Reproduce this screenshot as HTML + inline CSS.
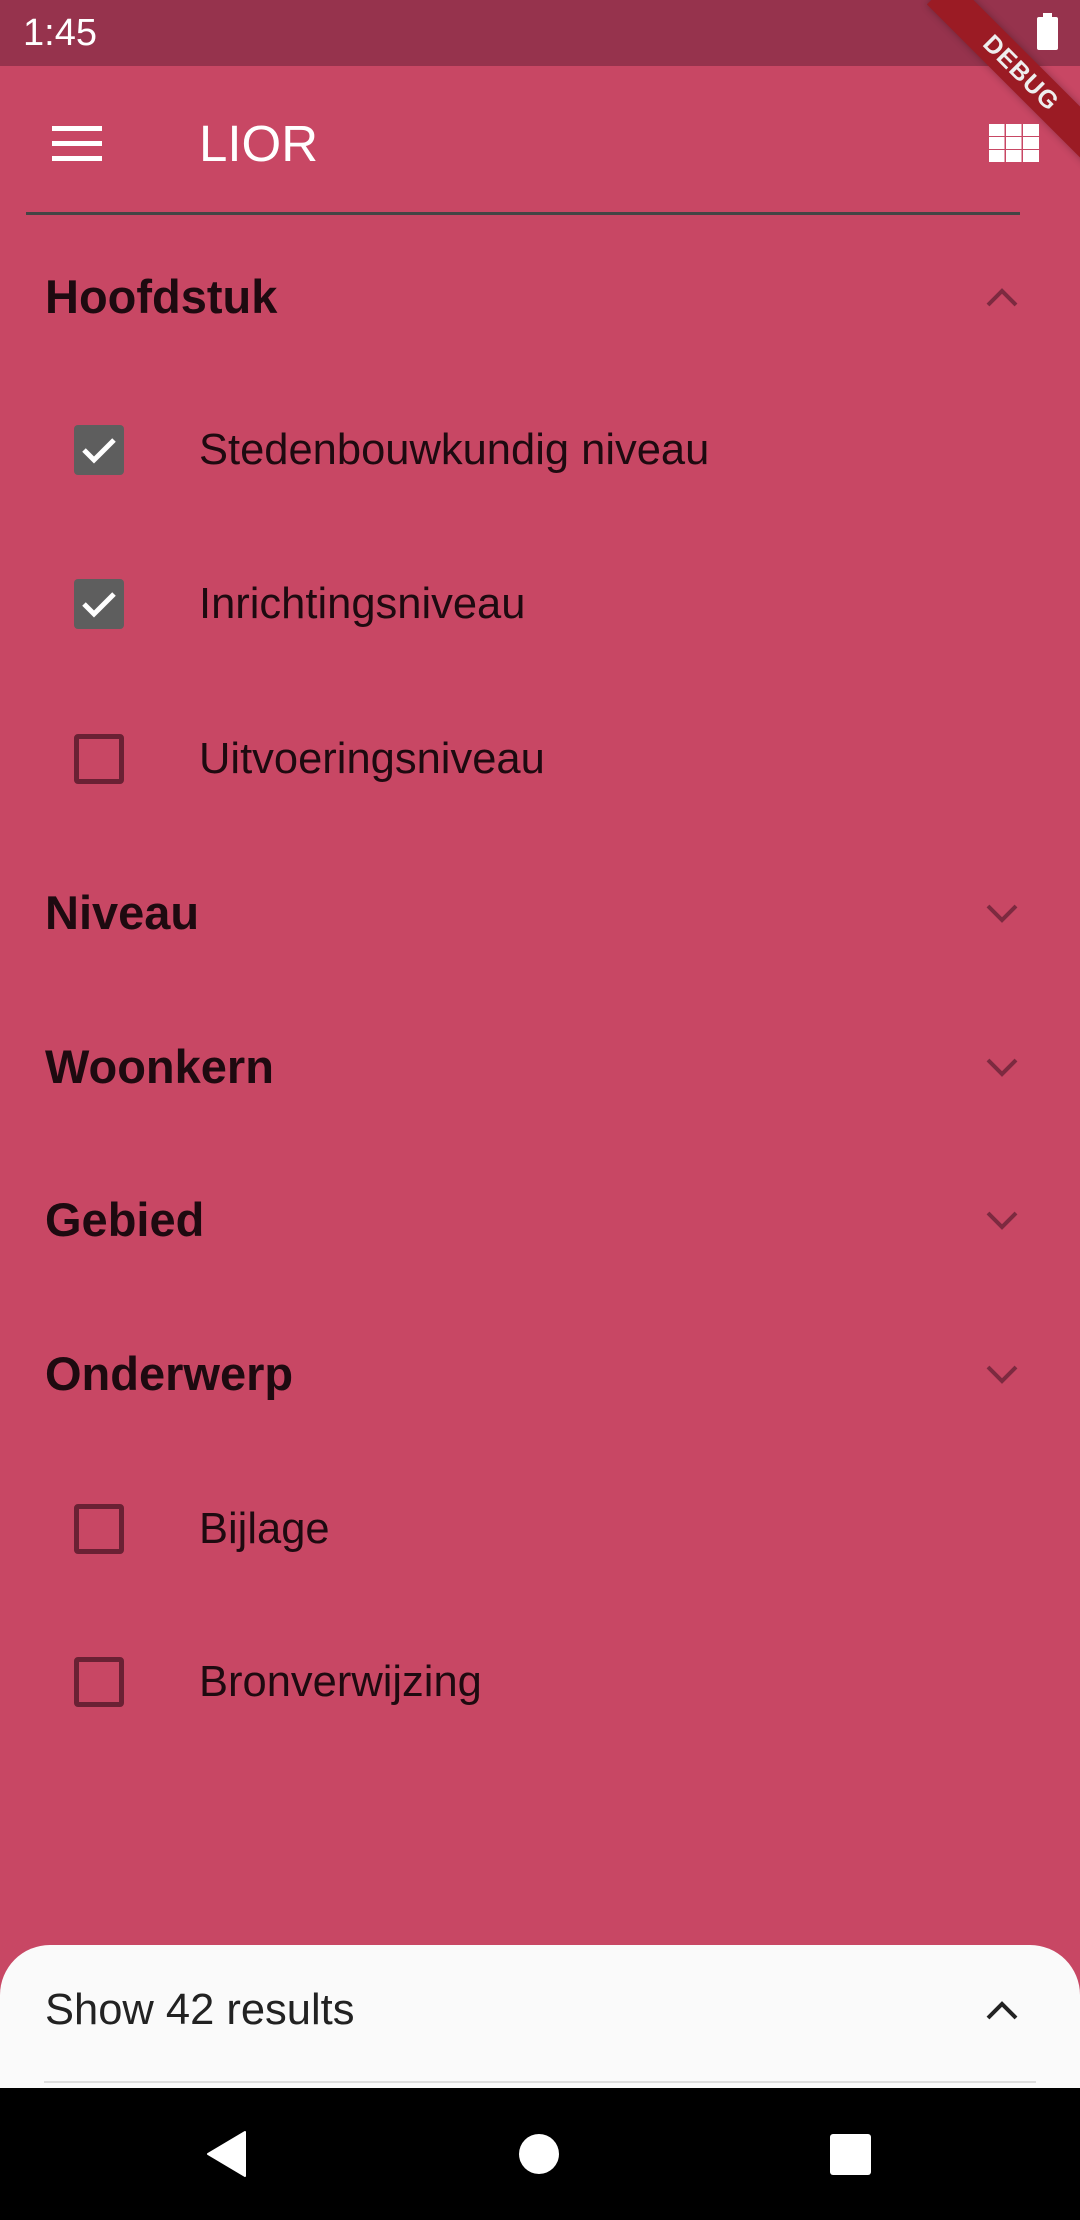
<!DOCTYPE html>
<html><head><meta charset="utf-8"><style>
*{margin:0;padding:0;box-sizing:border-box}
body{width:1080px;height:2220px;overflow:hidden;background:#c84764;font-family:"Liberation Sans",sans-serif;position:relative}
.abs{position:absolute}
.status{left:0;top:0;width:1080px;height:66px;background:#96334d}
.time{left:23px;top:12px;color:#fff;font-size:38px}
.title{left:199px;top:114px;color:#fff;font-size:51px;font-weight:500}
.divider{left:26px;top:212px;width:994px;height:3px;background:#444}
.hdr{left:45px;font-size:47px;font-weight:bold;color:#1e0a10;line-height:60px}
.item{left:199px;font-size:43.5px;color:#1e0a10;line-height:60px}
.cb{left:74px;width:50px;height:50px;border-radius:4px}
.cb.on{background:#5e5e5e}
.cb.off{border:5px solid #6a2134}
.chev{left:982px;width:40px;height:40px}
.sheet{left:0;top:1945px;width:1080px;height:160px;background:#fafafa;border-radius:50px 50px 0 0}
.nav{left:0;top:2088px;width:1080px;height:132px;background:#000}
</style></head><body>
<div class="abs status"></div>
<div class="abs time">1:45</div>
<div class="abs" style="left:1037px;top:17px;width:21px;height:33px;background:#fff;border-radius:2px"></div>
<div class="abs" style="left:1043px;top:13px;width:9px;height:5px;background:#fff"></div>

<svg class="abs" style="left:52px;top:126px" width="50" height="36"><rect x="0" y="0" width="50" height="5" fill="#fff"/><rect x="0" y="15" width="50" height="5" fill="#fff"/><rect x="0" y="30" width="50" height="5" fill="#fff"/></svg>
<div class="abs title">LIOR</div>
<svg class="abs" style="left:989px;top:124px" width="50" height="38" fill="#fff">
<rect x="0" y="0" width="15.5" height="12"/><rect x="17" y="0" width="15.5" height="12"/><rect x="34" y="0" width="16" height="12"/>
<rect x="0" y="13" width="15.5" height="12"/><rect x="17" y="13" width="15.5" height="12"/><rect x="34" y="13" width="16" height="12"/>
<rect x="0" y="26" width="15.5" height="12"/><rect x="17" y="26" width="15.5" height="12"/><rect x="34" y="26" width="16" height="12"/>
</svg>
<div class="abs divider"></div>

<div class="abs hdr" style="top:267px">Hoofdstuk</div>
<svg class="abs chev" style="top:277px" viewBox="0 0 40 40"><path d="M6 28 L20 14 L34 28" stroke="#7c2a40" stroke-width="4" fill="none"/></svg>

<div class="abs cb on" style="top:425px"><svg width="50" height="50"><path d="M10 25 L20 35 L40 15" stroke="#fff" stroke-width="5" fill="none"/></svg></div>
<div class="abs item" style="top:420px">Stedenbouwkundig niveau</div>
<div class="abs cb on" style="top:579px"><svg width="50" height="50"><path d="M10 25 L20 35 L40 15" stroke="#fff" stroke-width="5" fill="none"/></svg></div>
<div class="abs item" style="top:574px">Inrichtingsniveau</div>
<div class="abs cb off" style="top:734px"></div>
<div class="abs item" style="top:729px">Uitvoeringsniveau</div>

<div class="abs hdr" style="top:883px">Niveau</div>
<svg class="abs chev" style="top:893px" viewBox="0 0 40 40"><path d="M6 13 L20 27 L34 13" stroke="#7c2a40" stroke-width="4" fill="none"/></svg>
<div class="abs hdr" style="top:1037px">Woonkern</div>
<svg class="abs chev" style="top:1047px" viewBox="0 0 40 40"><path d="M6 13 L20 27 L34 13" stroke="#7c2a40" stroke-width="4" fill="none"/></svg>
<div class="abs hdr" style="top:1190px">Gebied</div>
<svg class="abs chev" style="top:1200px" viewBox="0 0 40 40"><path d="M6 13 L20 27 L34 13" stroke="#7c2a40" stroke-width="4" fill="none"/></svg>
<div class="abs hdr" style="top:1344px">Onderwerp</div>
<svg class="abs chev" style="top:1354px" viewBox="0 0 40 40"><path d="M6 13 L20 27 L34 13" stroke="#7c2a40" stroke-width="4" fill="none"/></svg>

<div class="abs cb off" style="top:1504px"></div>
<div class="abs item" style="top:1499px">Bijlage</div>
<div class="abs cb off" style="top:1657px"></div>
<div class="abs item" style="top:1652px">Bronverwijzing</div>

<div class="abs sheet"></div>
<div class="abs" style="left:45px;top:1980px;font-size:43.5px;color:#222;line-height:60px">Show 42 results</div>
<svg class="abs chev" style="top:1990px" viewBox="0 0 40 40"><path d="M6 28 L20 14 L34 28" stroke="#222" stroke-width="4" fill="none"/></svg>
<div class="abs" style="left:44px;top:2081px;width:992px;height:2px;background:#ddd"></div>

<div class="abs nav"></div>
<svg class="abs" style="left:200px;top:2128px" width="700" height="52" fill="#fff">
<path d="M45 4 L45 48 L8 26 Z" stroke="#fff" stroke-width="2" stroke-linejoin="round"/>
<circle cx="339" cy="26" r="20"/>
<rect x="630" y="6" width="41" height="41" rx="3"/>
</svg>

<div class="abs" style="left:906px;top:55px;width:230px;height:36px;background:#9b1b24;transform:rotate(45deg);color:#eee;font-size:25px;font-weight:bold;text-align:center;line-height:36px;letter-spacing:1px;box-shadow:0 0 8px rgba(0,0,0,0.3)">DEBUG</div>
</body></html>
